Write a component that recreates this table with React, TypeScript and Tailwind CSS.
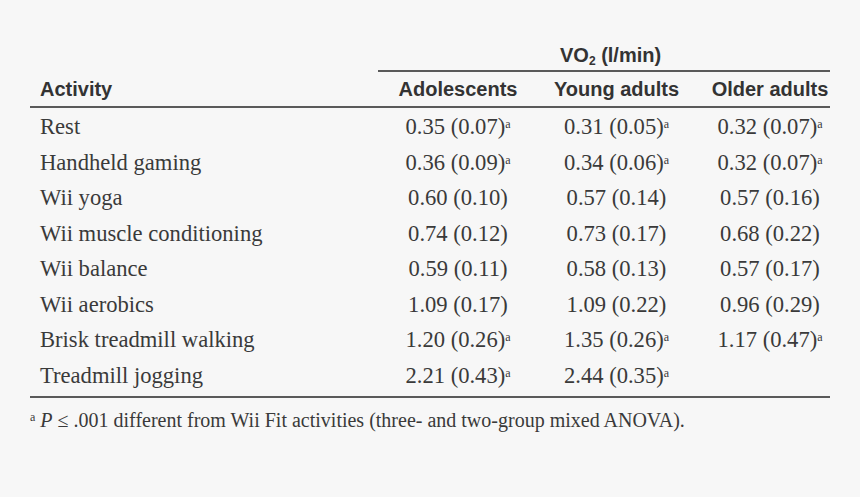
import React from 'react'

const rows: { activity: string; values: [string, boolean][] }[] = [
  { activity: 'Rest', values: [['0.35 (0.07)', true], ['0.31 (0.05)', true], ['0.32 (0.07)', true]] },
  { activity: 'Handheld gaming', values: [['0.36 (0.09)', true], ['0.34 (0.06)', true], ['0.32 (0.07)', true]] },
  { activity: 'Wii yoga', values: [['0.60 (0.10)', false], ['0.57 (0.14)', false], ['0.57 (0.16)', false]] },
  { activity: 'Wii muscle conditioning', values: [['0.74 (0.12)', false], ['0.73 (0.17)', false], ['0.68 (0.22)', false]] },
  { activity: 'Wii balance', values: [['0.59 (0.11)', false], ['0.58 (0.13)', false], ['0.57 (0.17)', false]] },
  { activity: 'Wii aerobics', values: [['1.09 (0.17)', false], ['1.09 (0.22)', false], ['0.96 (0.29)', false]] },
  { activity: 'Brisk treadmill walking', values: [['1.20 (0.26)', true], ['1.35 (0.26)', true], ['1.17 (0.47)', true]] },
  { activity: 'Treadmill jogging', values: [['2.21 (0.43)', true], ['2.44 (0.35)', true], ['', false]] },
]

const sans = { fontFamily: '"Liberation Sans", Arial, sans-serif' }
const serif = { fontFamily: '"Liberation Serif", "Times New Roman", serif' }

function Value({ text, mark }: { text: string; mark: boolean }) {
  return (
    <span>
      {text}
      {mark && <sup className="text-[12px]">a</sup>}
    </span>
  )
}

export default function App() {
  return (
    <main className="min-h-[497px] w-full bg-[#f7f7f7] pt-[40px] text-[#333]">
      <div className="ml-[30px] w-[800px]">
        {/* spanning header */}
        <div className="ml-[348px] border-b-2 border-[#5a5a5a] pl-[182px]" style={sans}>
          <span className="text-[20px] font-bold leading-[30px]">
            VO<sub className="text-[12px]">2</sub> (l/min)
          </span>
        </div>

        {/* column headers */}
        <div
          className="grid grid-cols-[348px_160px_157px_135px] border-b-2 border-[#5a5a5a] text-[20px] font-bold leading-[34px]"
          style={sans}
        >
          <div className="pl-[10px]">Activity</div>
          <div className="text-center">Adolescents</div>
          <div className="text-center">Young adults</div>
          <div className="pl-[15px] text-center">Older adults</div>
        </div>

        {/* body */}
        <div className="border-b-2 border-[#5a5a5a] pt-[1px] pb-[3px] text-[22.6px] leading-[35.5px] text-[#3a3a3a]" style={serif}>
          {rows.map((row) => (
            <div key={row.activity} className="grid grid-cols-[348px_160px_157px_135px]">
              <div className="pl-[10px]">{row.activity}</div>
              <div className="text-center">
                <Value text={row.values[0][0]} mark={row.values[0][1]} />
              </div>
              <div className="text-center">
                <Value text={row.values[1][0]} mark={row.values[1][1]} />
              </div>
              <div className="pl-[15px] text-center">
                <Value text={row.values[2][0]} mark={row.values[2][1]} />
              </div>
            </div>
          ))}
        </div>

        {/* footnote */}
        <p className="pt-[7px] text-[20px] leading-[30px] text-[#3a3a3a]" style={serif}>
          <sup className="text-[12px]">a</sup> <i>P</i> ≤ .001 different from Wii Fit activities (three- and two-group mixed ANOVA).
        </p>
      </div>
    </main>
  )
}
